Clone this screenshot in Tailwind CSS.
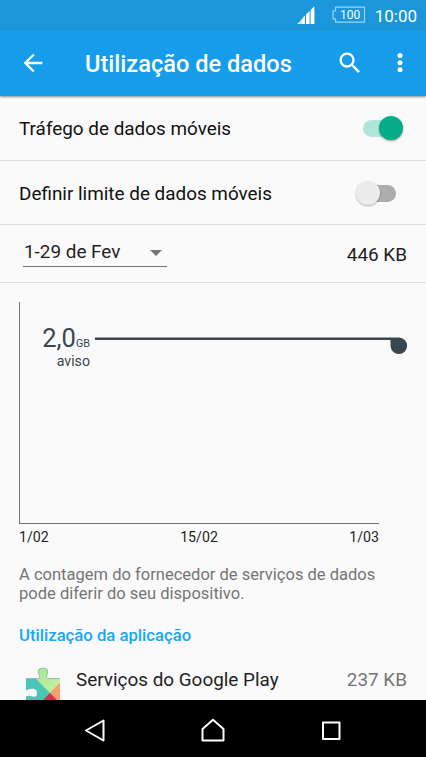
<!DOCTYPE html>
<html lang="pt">
  <head>
    <meta charset="UTF-8" />
    <meta name="viewport" content="width=device-width, initial-scale=1.0" />
    <title>Utilização de dados</title>
    <script src="https://cdn.jsdelivr.net/npm/@tailwindcss/browser@4"></script>
  </head>

  <body
    class="flex flex-col w-[426px] h-[757px] overflow-hidden bg-[#fafafa] font-[Roboto,sans-serif] text-[#1f1f1f]"
  >
    <!-- Status bar -->
    <div
      class="flex shrink-0 items-center justify-end h-[30px] pr-[9px] bg-[#1b96da] text-white"
    >
      <svg class="w-[18px] h-[18px] mr-[17px]" viewBox="0 0 18 18">
        <path d="M0 18L5 13V18z" fill="#c4e3f5" />
        <path d="M5 18V12.6L8 9.6V18z" fill="#fff" />
        <path d="M9 18V8.6L12.6 5V18z" fill="#fff" />
        <path d="M13.6 18V4L17.4 0.2V18z" fill="#fff" />
      </svg>
      <div class="relative w-[34px] h-[18px] mr-[9px]">
        <svg class="w-[34px] h-[18px]" viewBox="0 0 34 18" fill="none">
          <path
            d="M3.5 1.2H32.500V16.2H3.5V12.8H1V4.8H3.5z"
            stroke="#9ed2f1"
            stroke-width="1.2"
          />
        </svg>
        <span
          class="absolute inset-0 pl-[3px] text-center text-[12px] leading-[18px]"
          >100</span
        >
      </div>
      <span class="text-[17px] leading-[28px] pt-[1px]">10:00</span>
    </div>

    <!-- App bar -->
    <header
      class="flex shrink-0 items-center h-[66px] pl-[19px] pr-[14px] bg-[#159ceb] text-white shadow-[0_1px_2px_rgba(0,0,0,0.45)] z-10"
    >
      <svg class="w-[28px] h-[28px]" viewBox="0 0 24 24" fill="#fff">
        <path
          d="M20 11H7.83l5.59-5.59L12 4l-8 8 8 8 1.41-1.41L7.83 13H20v-2z"
        />
      </svg>
      <h1
        class="grow pl-[38px] pt-[1px] text-[23.6px] leading-[30px] font-medium whitespace-nowrap"
      >
        Utilização de dados
      </h1>
      <svg class="w-[28px] h-[28px] mr-[22px]" viewBox="0 0 24 24" fill="#fff">
        <path
          d="M15.5 14h-.79l-.28-.27A6.47 6.47 0 0 0 16 9.5 6.5 6.5 0 1 0 9.5 16c1.61 0 3.09-.59 4.23-1.57l.27.28v.79l5 4.99L20.49 19l-4.99-5zm-6 0a4.5 4.5 0 1 1 0-9 4.5 4.5 0 0 1 0 9z"
        />
      </svg>
      <svg class="w-[28px] h-[28px] -mr-[2px]" viewBox="0 0 28 28" fill="#fff">
        <circle cx="14" cy="6.6" r="2.5" />
        <circle cx="14" cy="13.7" r="2.5" />
        <circle cx="14" cy="20.8" r="2.5" />
      </svg>
    </header>

    <main class="flex flex-col grow min-h-0 overflow-hidden">
      <!-- Switches -->
      <div
        class="flex shrink-0 items-center justify-between h-[65px] px-[19px] border-b border-[#dfdfdf]"
      >
        <span class="pt-[3px] text-[18.9px] text-[#111]"
          >Tráfego de dados móveis</span
        >
        <div class="relative w-[44px] h-[24px]">
          <div
            class="absolute left-0 top-[4px] w-[36px] h-[17px] rounded-full bg-[#b0e6d9]"
          ></div>
          <div
            class="absolute right-[4px] top-0 w-[24px] h-[24px] rounded-full bg-[#05ac88] shadow-[0_1px_2px_rgba(0,0,0,0.4)]"
          ></div>
        </div>
      </div>
      <div
        class="flex shrink-0 items-center justify-between h-[64px] pl-[19px] pr-[30px] border-b border-[#dfdfdf]"
      >
        <span class="pt-[3px] text-[18.9px] text-[#111]"
          >Definir limite de dados móveis</span
        >
        <div class="relative w-[40px] h-[24px]">
          <div
            class="absolute right-0 top-[4px] w-[36px] h-[17px] rounded-full bg-[#adadad]"
          ></div>
          <div
            class="absolute left-0 top-0 w-[24px] h-[24px] rounded-full bg-[#ececec] shadow-[0_1px_2px_rgba(0,0,0,0.3)]"
          ></div>
        </div>
      </div>

      <!-- Cycle -->
      <div
        class="flex shrink-0 items-center justify-between h-[58px] pl-[23px] pr-[19px] border-b border-[#dfdfdf]"
      >
        <div
          class="flex items-center justify-between w-[144px] h-[29px] pl-[1px] pr-[5px] mb-[3px] border-b border-[#757575]"
        >
          <span class="pt-[2px] text-[18.9px]">1-29 de Fev</span>
          <svg class="w-[12px] h-[6px] mt-[2px]" viewBox="0 0 12 6">
            <path d="M0 0H12L6 6z" fill="#757575" />
          </svg>
        </div>
        <span class="pt-[3px] text-[18.9px]">446 KB</span>
      </div>

      <!-- Chart -->
      <div class="shrink-0 h-[241px] pt-[19px] pl-[19px]">
        <div
          class="relative w-[360px] h-[222px] border-l border-b border-[#757575]"
        >
          <div class="w-[70px] pt-[20px] text-right text-[#37474f]">
            <div class="h-[32px] text-[25.5px] leading-[33px] whitespace-nowrap">
              2,0<span class="text-[10.8px]">GB</span>
            </div>
            <div class="text-[14.2px] leading-[14px]">aviso</div>
          </div>
          <svg
            class="absolute left-[75px] top-[34px] w-[314px] h-[20px]"
            viewBox="0 0 314 20"
            fill="#37474f"
          >
            <path d="M0 1.5H304A8.300 8.300 0 1 1 295.500 10V4H0z" />
          </svg>
        </div>
      </div>
      <div
        class="flex shrink-0 justify-between w-[379px] pl-[19px] pt-[5px] text-[14.2px] leading-[17px]"
      >
        <span>1/02</span>
        <span>15/02</span>
        <span>1/03</span>
      </div>

      <p
        class="shrink-0 px-[19px] pt-[19px] text-[16.55px] leading-[19px] text-[#757575]"
      >
        A contagem do fornecedor de serviços de dados<br />
        pode diferir do seu dispositivo.
      </p>

      <!-- Apps -->
      <h2
        class="shrink-0 pl-[19px] pt-[23px] text-[16.7px] leading-[20px] font-medium text-[#14a8fa]"
      >
        Utilização da aplicação
      </h2>
      <div class="flex shrink-0 items-start pt-[20px] pl-[25px] pr-[19px]">
        <svg class="w-[36px] h-[36px]" viewBox="0 0 36 36">
          <defs>
            <clipPath id="puzzle">
              <path
                d="M1 12.500H13.500Q15.500 11.500 14 9C12.500 5 13 2 18 2S23.500 5 22 9Q20.500 11.500 22.500 12.500H35V36H1V30.500C4 28 12 34 12 27.500S5 22.500 1 24.500z"
              />
            </clipPath>
            <linearGradient id="green" x1="0" y1="0" x2="1" y2="1">
              <stop offset="0" stop-color="#a3e3a0" />
              <stop offset="1" stop-color="#caf49c" />
            </linearGradient>
          </defs>
          <g clip-path="url(#puzzle)">
            <path d="M0 0H36V36H0z" fill="#4cc4b8" />
            <path d="M10 12V0H36V16L25 27z" fill="url(#green)" />
            <path d="M36 16V36H34L25 27z" fill="#fb9f70" />
            <path d="M25 27L34 36H16z" fill="#d6304f" />
          </g>
          <path
            d="M1 12.500H13.500Q15.500 11.500 14 9C12.500 5 13 2 18 2S23.500 5 22 9Q20.500 11.500 22.500 12.500H35"
            fill="none"
            stroke="#7d9a7a"
            stroke-opacity="0.6"
            stroke-width="0.8"
          />
        </svg>
        <span class="grow pl-[15px] text-[18.9px] leading-[27px]"
          >Serviços do Google Play</span
        >
        <span class="text-[18.9px] leading-[27px] text-[#757575]">237 KB</span>
      </div>
    </main>

    <!-- Navigation bar -->
    <nav class="flex shrink-0 items-center h-[57px] pt-[3px] pl-[82px] bg-black">
      <svg class="w-[26px] h-[26px]" viewBox="0 0 26 26" fill="none">
        <path
          d="M4 13.500L21.500 3.500V23.500z"
          stroke="#fff"
          stroke-width="2"
          stroke-linejoin="round"
        />
      </svg>
      <svg class="w-[26px] h-[26px] ml-[92px]" viewBox="0 0 26 26" fill="none">
        <path
          d="M2.500 12L13 2.800L23.500 12V23.500H2.500z"
          stroke="#fff"
          stroke-width="2"
          stroke-linejoin="round"
        />
      </svg>
      <svg class="w-[26px] h-[26px] ml-[93px]" viewBox="0 0 26 26" fill="none">
        <path
          d="M4 5.500H20.500V22H4z"
          stroke="#fff"
          stroke-width="2"
          stroke-linejoin="round"
        />
      </svg>
    </nav>
  </body>
</html>
